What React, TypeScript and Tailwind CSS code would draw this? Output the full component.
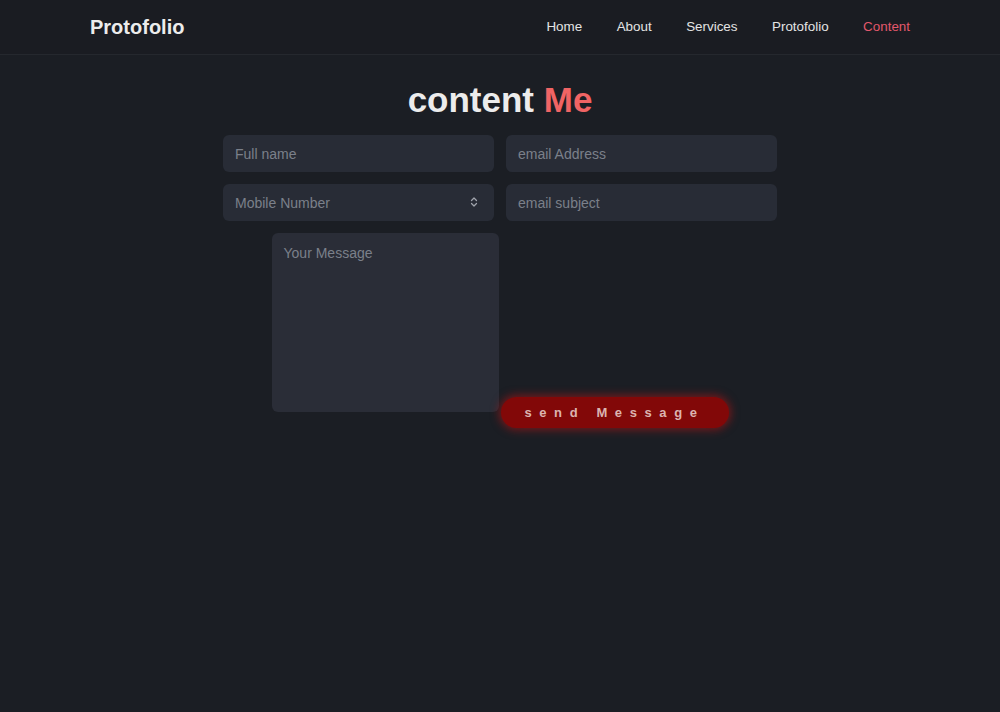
import { ChevronsUpDown } from "lucide-react";

const links = ["Home", "About", "Services", "Protofolio", "Content"];

export default function App() {
    return (
        <div className="min-h-[712px] bg-[#1b1e24] font-['Liberation_Sans',Arial,sans-serif] text-[#e6e6e6]">
            {/* Header */}
            <header className="h-[55px] bg-[#1a1c22] border-b border-[#25282e] flex items-center justify-between px-[90px]">
                <h1 className="text-[20px] font-bold text-[#ececec]">Protofolio</h1>
                <nav className="flex items-center gap-[34.5px] text-[13.4px]">
                    {links.map(link => (
                        <a
                            key={link}
                            href="#"
                            className={link === "Content" ? "text-[#e2586c]" : "text-[#e4e4e4]"}
                        >
                            {link}
                        </a>
                    ))}
                </nav>
            </header>

            {/* Contact */}
            <section className="flex flex-col items-center pt-[22px]">
                <h2 className="text-[35px] font-bold leading-[46px] text-[#ececec]">
                    content <span className="text-[#f06464]">Me</span>
                </h2>

                <form className="w-[554px] mt-[12px] flex flex-col gap-[12px]" onSubmit={e => e.preventDefault()}>
                    <div className="flex justify-between">
                        <input
                            placeholder="Full name"
                            className="w-[271px] h-[37px] rounded-md bg-[#282c36] px-3 text-[14px] text-[#d0d0d0] placeholder-[#7b808a] outline-none"
                        />
                        <input
                            placeholder="email Address"
                            className="w-[271px] h-[37px] rounded-md bg-[#282c36] px-3 text-[14px] text-[#d0d0d0] placeholder-[#7b808a] outline-none"
                        />
                    </div>
                    <div className="flex justify-between">
                        <div className="relative w-[271px] h-[37px] rounded-md bg-[#282c36] px-3 pt-px flex items-center text-[14px] text-[#7b808a]">
                            Mobile Number
                            <ChevronsUpDown className="absolute right-[14px] top-[12px] w-[12px] h-[12px] text-[#a0a4ac]" strokeWidth={2.5} />
                        </div>
                        <input
                            placeholder="email subject"
                            className="w-[271px] h-[37px] rounded-md bg-[#282c36] px-3 text-[14px] text-[#d0d0d0] placeholder-[#7b808a] outline-none"
                        />
                    </div>

                    <div className="flex justify-center items-end gap-[2px]">
                        <textarea
                            placeholder="Your Message"
                            className="w-[227px] h-[179px] rounded-md bg-[#2a2d37] px-3 py-[10px] text-[14px] text-[#d0d0d0] placeholder-[#7b808a] outline-none resize-none"
                        />
                        <button
                            type="submit"
                            className="w-[228px] h-[31px] mb-[-16px] rounded-full bg-[#820808] shadow-[0_0_8px_2px_rgba(190,20,20,0.55)] text-[13px] font-bold tracking-[7.6px] text-[#dcb4b0]"
                        >
                            send Message
                        </button>
                    </div>
                </form>
            </section>
        </div>
    );
}
